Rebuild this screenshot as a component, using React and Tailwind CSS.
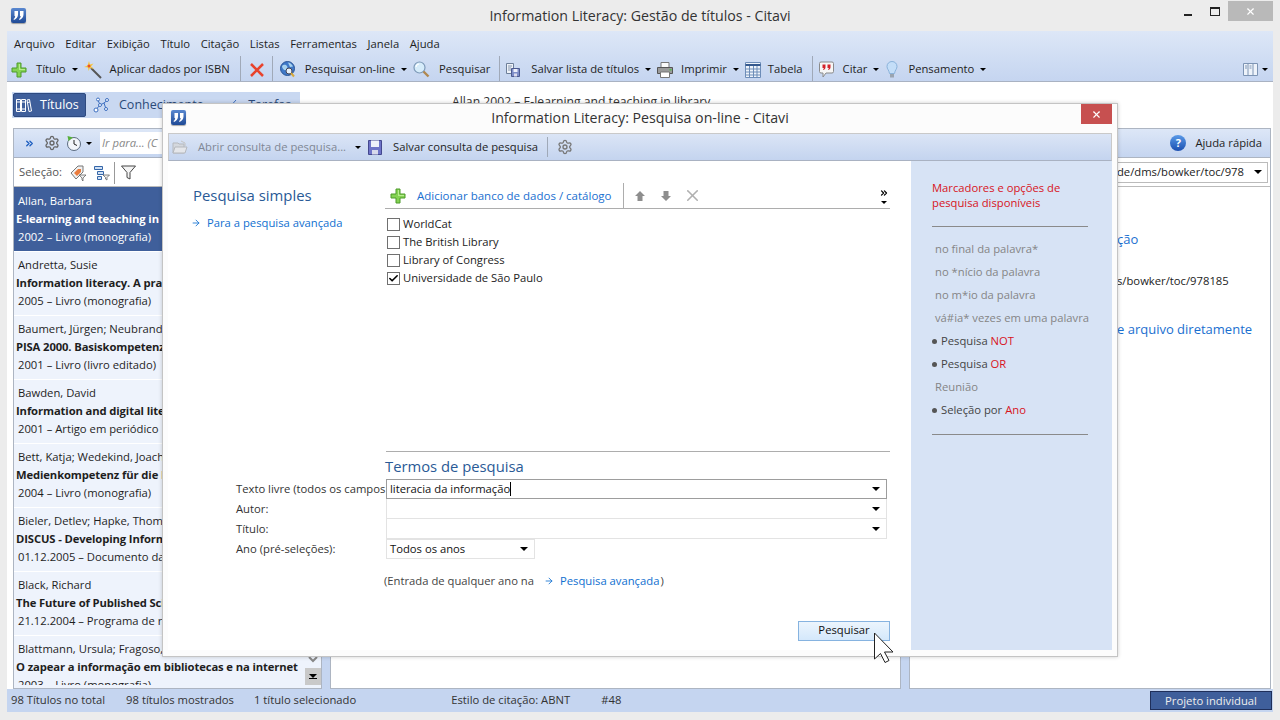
import React from 'react';
import { ChevronsRight, Settings, X, ArrowRight, Check } from 'lucide-react';

const FONT = "font-['Open_Sans','Noto_Sans',sans-serif]";

const MENU = ['Arquivo', 'Editar', 'Exibição', 'Título', 'Citação', 'Listas', 'Ferramentas', 'Janela', 'Ajuda'];

const TITLES = [
  { a: 'Allan, Barbara', t: 'E-learning and teaching in library', d: '2002 – Livro (monografia)', sel: true },
  { a: 'Andretta, Susie', t: 'Information literacy. A practitioner', d: '2005 – Livro (monografia)' },
  { a: 'Baumert, Jürgen; Neubrand', t: 'PISA 2000. Basiskompetenzen', d: '2001 – Livro (livro editado)' },
  { a: 'Bawden, David', t: 'Information and digital literacies', d: '2001 – Artigo em periódico' },
  { a: 'Bett, Katja; Wedekind, Joachim', t: 'Medienkompetenz für die Hochschule', d: '2004 – Livro (monografia)' },
  { a: 'Bieler, Detlev; Hapke, Thomas', t: 'DISCUS - Developing Information', d: '01.12.2005 – Documento da internet' },
  { a: 'Black, Richard', t: 'The Future of Published Science', d: '21.12.2004 – Programa de rádio' },
  { a: 'Blattmann, Ursula; Fragoso, Graça', t: 'O zapear a informação em bibliotecas e na internet', d: '2003 – Livro (monografia)' },
];

const DATABASES = [
  { name: 'WorldCat' },
  { name: 'The British Library' },
  { name: 'Library of Congress' },
  { name: 'Universidade de São Paulo', checked: true },
];

const HINTS = ['no final da palavra*', 'no *nício da palavra', 'no m*io da palavra', 'vá#ia* vezes em uma palavra'];

function Logo() {
  return (
    <span className="w-[15px] h-[15px] rounded-[2px] bg-gradient-to-b from-[#5a88d0] to-[#1f4a96] flex items-center justify-center shadow-[0_1px_1px_#0005]">
      <svg width="11" height="9" viewBox="0 0 11 9" fill="#fff">
        <path d="M1.500 0h3.500v3.500C5 6 3.500 8 1 9L.5 8c1-.5 1.500-1.500 1.700-3H1.500zM7 0h3.500v3.500c0 2.500-1.500 4.500-4 5.500L6 8c1-.5 1.500-1.500 1.700-3H7z" />
      </svg>
    </span>
  );
}

function Caret({ className = 'border-x-[3px] border-t-[3px]' }) {
  return <span className={`inline-block w-0 h-0 border-x-transparent border-t-black ${className}`} />;
}

function Plus2({ size = 16 }) {
  return (
    <svg width={size} height={size} viewBox="0 0 16 16">
      <path d="M6 1h4v5h5v4h-5v5H6v-5H1V6h5z" fill="#84d352" stroke="#4d9a2a" strokeWidth="1" />
      <path d="M7 2h2v5h5v1H8V2z" fill="#b8ec8f" />
    </svg>
  );
}

function Wand() {
  return (
    <svg width="18" height="18" viewBox="0 0 18 18">
      <path d="M7 7l10 10" stroke="#555" strokeWidth="2" />
      <path d="M5 0l1 3.500L9.500 2.500 7 5.500 10 8 6 7 4.500 10 4 6.500 0 6l3.500-1.500z" fill="#f6c640" />
      <circle cx="5" cy="5" r="1.500" fill="#e8502c" />
    </svg>
  );
}

function RedX() {
  return (
    <svg width="16" height="16" viewBox="0 0 16 16">
      <path d="M2 2l12 12M14 2L2 14" stroke="#e8432d" strokeWidth="2.500" />
    </svg>
  );
}

function Globe() {
  return (
    <svg width="16" height="17" viewBox="0 0 16 17">
      <circle cx="7.500" cy="7.500" r="7" fill="#3f78c8" stroke="#2a5596" />
      <path d="M2 5c2-2 4-1 5 0s0 3-1 4-4-1-4-4zM8 1.500c2 0 4 2 5 4l-3 .5z" fill="#a8d2ee" />
      <circle cx="9" cy="10" r="3" fill="#e6f0fa" stroke="#445" />
      <path d="M11 12l3 3.500" stroke="#d8a93a" strokeWidth="2" />
    </svg>
  );
}

function Magnifier() {
  return (
    <svg width="17" height="17" viewBox="0 0 17 17">
      <circle cx="6.500" cy="6.500" r="5.500" fill="#d6ecfa" stroke="#7e9ab8" strokeWidth="1.200" />
      <path d="M3 6a3.500 3.500 0 0 1 3-3" fill="none" stroke="#fff" strokeWidth="1.200" />
      <path d="M10.500 10.500l5 5" stroke="#b08850" strokeWidth="2.400" />
    </svg>
  );
}

function SaveList() {
  return (
    <svg width="16" height="16" viewBox="0 0 16 16">
      <path d="M1.500 1.500h7v10h-7z" fill="#eef2f8" stroke="#6d7f99" />
      <path d="M3 4h4M3 6h3M3 8h3" stroke="#8798b0" />
      <path d="M6.500 6.500h8v8h-8z" fill="#7f8ec8" stroke="#4c5a90" />
      <path d="M8.500 7h4v3h-4z" fill="#eef0fb" />
      <path d="M9 11.500h3v3H9z" fill="#dde" />
    </svg>
  );
}

function PrinterIcon() {
  return (
    <svg width="16" height="16" viewBox="0 0 16 16">
      <path d="M4 .500h8v5H4z" fill="#fafafa" stroke="#777" />
      <path d="M.500 5.500h15v6H.500z" fill="#9a9a9a" stroke="#555" />
      <path d="M3.500 10h9v5.500h-9z" fill="#fff" stroke="#777" />
      <path d="M12.500 7h2v1.500h-2z" fill="#4fc04a" />
    </svg>
  );
}

function Floppy() {
  return (
    <svg width="14" height="15" viewBox="0 0 14 15">
      <path d="M.5.500h13v14H.5z" fill="#6e73c8" stroke="#44488f" />
      <path d="M3 .500h8v6.500H3z" fill="#eef0fb" />
      <path d="M4 10h6v4.500H4z" fill="#d8daec" />
    </svg>
  );
}

function OpenFolder() {
  return (
    <svg width="16" height="14" viewBox="0 0 16 14">
      <path d="M1 3h5l1 1h5v9H1z" fill="#d4d8de" stroke="#b5b8bd" />
      <path d="M9 1l4 2v3" fill="none" stroke="#c4c4c4" />
      <path d="M1 13l2-6h12l-2 6z" fill="#e4e6ea" stroke="#b5b8bd" />
    </svg>
  );
}

function TableIcon() {
  return (
    <svg width="16" height="16" viewBox="0 0 16 16" fill="none" stroke="#6d8db8">
      <path d="M.5.500h15v15H.5z" fill="#eef3fa" />
      <path d="M.5 3h15" stroke="#35598e" strokeWidth="2" />
      <path d="M.5 7h15M.5 10h15M.5 13h15M4.500 4v12M8.500 4v12M12 4v12" />
    </svg>
  );
}

function QuoteBubble() {
  return (
    <svg width="15" height="17" viewBox="0 0 15 17">
      <path d="M2 1h11q1.500 0 1.500 1.500v8q0 1.500-1.500 1.500H7l-3 4v-4H2Q.500 12 .500 10.500v-8Q.500 1 2 1z" fill="#f6f6f6" stroke="#8a8a8a" />
      <path d="M3.500 3.500h3v3q0 1.500-2 2.500l-.5-.8q1-.6 1-1.200H3.500zM8.500 3.500h3v3q0 1.500-2 2.500l-.5-.8q1-.6 1-1.200H8.500z" fill="#d3222a" />
    </svg>
  );
}

function Bulb() {
  return (
    <svg width="12" height="18" viewBox="0 0 12 18">
      <path d="M6 .500C3 .500 1 2.800 1 5.500c0 2.500 2 3.500 2.500 7h5C9 9 11 8 11 5.500 11 2.800 9 .500 6 .500z" fill="#c4def8" stroke="#8ab2da" />
      <path d="M4 13h4v3.500H4z" fill="#9aa4b0" />
    </svg>
  );
}

function Help() {
  return (
    <span className="w-[16px] h-[16px] rounded-full bg-gradient-to-b from-[#5a9ae8] to-[#1c4fb0] text-white text-[11px] font-bold flex items-center justify-center">?</span>
  );
}

function TitlesIcon() {
  return (
    <svg width="16" height="15" viewBox="0 0 16 15" fill="none" stroke="#fff" strokeWidth="1">
      <path d="M.5 1.500h4v12h-4zM5.500 1.500h4v12h-4zM11 2l2.500-.5 2 11.500-2.500.5z" />
      <path d="M1 4h3M1 11h3M6 4h3M6 11h3M11.500 4.500l2.500-.5" />
    </svg>
  );
}

function KnowledgeIcon() {
  return (
    <svg width="17" height="17" viewBox="0 0 17 17" fill="#fff" stroke="#3d6fc0">
      <path d="M3.500 12L7 8l4-2 3-2.500M7 8L5 3M11 6l2 6" fill="none" />
      <circle cx="3" cy="13" r="2" />
      <circle cx="7" cy="8" r="1.500" />
      <circle cx="5" cy="2.500" r="1.500" />
      <circle cx="14" cy="3" r="1.500" />
      <circle cx="13" cy="12" r="1.500" />
    </svg>
  );
}

function TasksIcon() {
  return (
    <svg width="15" height="12" viewBox="0 0 15 12" fill="none" stroke="#3d6fc0">
      <path d="M1 7l3 3 8-9" />
      <path d="M8 8h6M10 11h4" />
    </svg>
  );
}

function ClockIcon() {
  return (
    <svg width="16" height="16" viewBox="0 0 16 16">
      <circle cx="8" cy="9" r="6.500" fill="#f2f5fa" stroke="#5b6b80" />
      <path d="M8 5v4l3 1.500" fill="none" stroke="#222" />
      <path d="M1.500 1l5.500 1.500-4.500 3.500z" fill="#57b03a" />
    </svg>
  );
}

function TagIcon() {
  return (
    <svg width="17" height="16" viewBox="0 0 17 16">
      <path d="M1 8l7-7h5v6l-7 7z" fill="#f0f0f0" stroke="#777" />
      <path d="M4 8l4-4h3v3l-4 4z" fill="#ea7b3c" />
      <path d="M9 10h7l-3 3v3l-1-1v-2z" fill="#eee" stroke="#555" strokeWidth=".7" />
    </svg>
  );
}

function TreeIcon() {
  return (
    <svg width="17" height="16" viewBox="0 0 17 16" fill="#cfe0f5" stroke="#3566a8">
      <path d="M1.500 1.500h8v3h-8zM4.500 6.500h6v3h-6zM4.500 11.500h4v3h-4z" />
      <path d="M10 10h6.500l-2.500 2.500V15l-1.500-1v-1.500z" fill="#eee" stroke="#555" strokeWidth=".7" />
    </svg>
  );
}

function FilterIcon() {
  return (
    <svg width="15" height="15" viewBox="0 0 15 15">
      <path d="M.5 1h14L9 7.500V14l-3-1.500v-5z" fill="#f4f4f4" stroke="#444" />
    </svg>
  );
}

function ColumnsIcon() {
  return (
    <svg width="15" height="13" viewBox="0 0 15 13" fill="none" stroke="#7d94b4">
      <path d="M.5.500h14v12H.5z" fill="#eef3fa" />
      <path d="M5 .500v12M10 .500v12M2 3h2M2 5h2M6.500 3h2M6.500 5h2" />
    </svg>
  );
}

function Cursor() {
  return (
    <svg width="21" height="31" viewBox="0 0 21 31">
      <path d="M1.500 1v26l6-5.500 4.500 9 4-2-4.500-8.500H20z" fill="#fff" stroke="#222" strokeWidth="1" />
    </svg>
  );
}

function ToolItem({ icon, label, caret, className = '' }) {
  return (
    <div className={`flex items-center h-[22px] whitespace-nowrap ${className}`}>
      {icon}
      <span className="text-[11.25px] text-[#1e1e1e]">{label}</span>
      {caret && <span className="ml-[6px] flex"><Caret /></span>}
    </div>
  );
}

function TitleRow({ a, t, d, sel }) {
  return (
    <div className={`h-[64px] shrink-0 text-[11.25px] leading-[18px] whitespace-nowrap overflow-hidden ${sel ? 'pt-[5px] bg-[#3f5f9b] text-white' : 'pt-[4px] border-t border-white text-[#1e1e1e]'}`}>
      <div className="pl-[4px]">{a}</div>
      <div className="pl-[2px] font-bold tracking-[-0.12px]">{t}</div>
      <div className="pl-[4px]">{d}</div>
    </div>
  );
}

function SearchField({ label, value, active, half }) {
  return (
    <div className="flex items-center h-[20px]">
      <span className="w-[150px] shrink-0 text-[11.25px] text-[#333] whitespace-nowrap">{label}</span>
      <div className={`h-[20px] flex items-center justify-between pl-[3px] pr-[6px] text-[11.25px] text-[#111] ${half ? 'w-[149px] border border-[#e3e3e3]' : 'w-[501px]'} ${active ? 'border border-[#9d9d9d]' : half ? '' : 'border-b border-x border-[#e3e3e3]'}`}>
        <span className="flex items-center">
          {value}
          {active && <span className="w-px h-[14px] bg-black" />}
        </span>
        <Caret className="border-x-[4px] border-t-[4px]" />
      </div>
    </div>
  );
}

function SearchDialog() {
  return (
    <div className="absolute left-[162px] top-[103px] w-[956px] h-[554px] bg-[#fcfcfc] border border-[#c4c4c4] shadow-[0_0_4px_#0003] flex flex-col px-[5px] pb-[6px]">
      <div className="h-[29px] pb-[2px] shrink-0 flex items-center relative">
        <span className="ml-[3px]"><Logo /></span>
        <span className="absolute left-0 right-0 text-center text-[14.2px] text-[#333]">Information Literacy: Pesquisa on-line - Citavi</span>
        <div className="ml-auto w-[31px] h-[20px] -mt-[7px] bg-[#c75050] flex items-center justify-center relative">
          <X size={11} strokeWidth={2.500} className="text-white" />
        </div>
      </div>
      <div className="h-[28px] shrink-0 flex items-center bg-gradient-to-b from-[#dbe5f6] to-[#c4d4ef] border border-[#c9c9c9] border-b-[#a9b2c2] pl-[3px]">
        <OpenFolder />
        <span className="ml-[10px] text-[11.25px] text-[#7f8794] whitespace-nowrap">Abrir consulta de pesquisa...</span>
        <span className="ml-[9px] flex"><Caret /></span>
        <span className="ml-[7px] flex"><Floppy /></span>
        <span className="ml-[11px] text-[11.25px] text-[#1e1e1e] whitespace-nowrap">Salvar consulta de pesquisa</span>
        <span className="ml-[9px] w-px h-[20px] bg-[#9fa9b8]" />
        <Settings size={16} className="ml-[9px] text-[#777]" />
      </div>
      <div className="flex-1 flex min-h-0">
        <div className="flex-1 min-w-0 bg-white flex flex-col pl-[25px] pr-[21px]">
          <div className="flex h-[291px] shrink-0">
            <div className="w-[192px] shrink-0 pt-[24px]">
              <div className="text-[14.9px] leading-[20px] text-[#2a5a96]">Pesquisa simples</div>
              <div className="mt-[10px] -ml-[2px] flex items-center text-[11.25px] text-[#0f6fd0] whitespace-nowrap">
                <ArrowRight size={10} className="mr-[6px]" />
                Para a pesquisa avançada
              </div>
            </div>
            <div className="flex-1 min-w-0">
              <div className="mt-[21px] pt-px h-[27px] flex items-center border-b border-[#adadad]">
                <span className="ml-[5px] flex"><Plus2 /></span>
                <span className="ml-[11px] text-[11.5px] text-[#1a6fd0] whitespace-nowrap">Adicionar banco de dados / catálogo</span>
                <span className="ml-[12px] w-px h-[26px] bg-[#adadad]" />
                <svg className="ml-[11px]" width="10" height="10" viewBox="0 0 10 10"><path d="M5 0l5 5H7.500v5h-5V5H0z" fill="#8e8e8e" /></svg>
                <svg className="ml-[16px]" width="10" height="10" viewBox="0 0 10 10"><path d="M5 10l5-5H7.500V0h-5v5H0z" fill="#8e8e8e" /></svg>
                <X size={19} className="ml-[12px] text-[#b0b0b0]" />
                <div className="ml-auto mr-[1px] flex flex-col items-center">
                  <ChevronsRight size={10} strokeWidth={3} className="text-black" />
                  <span className="mt-[3px] flex"><Caret /></span>
                </div>
              </div>
              <div className="mt-[6px] flex flex-col pl-[2px]">
                {DATABASES.map((db) => (
                  <label key={db.name} className="h-[18px] flex items-center text-[11.25px] text-[#222] whitespace-nowrap">
                    <span className="w-[13px] h-[13px] mr-[3px] border border-[#707070] bg-white flex items-center justify-center">
                      {db.checked && <Check size={11} strokeWidth={3.500} className="text-black" />}
                    </span>
                    {db.name}
                  </label>
                ))}
              </div>
            </div>
          </div>
          <div className="ml-[193px] -mt-px border-t border-[#adadad] pt-[4px] -indent-px text-[14.8px] leading-[21px] text-[#2a5a96]">Termos de pesquisa</div>
          <div className="ml-[43px] mt-[2px]">
            <SearchField label="Texto livre (todos os campos" value="literacia da informação" active />
            <SearchField label="Autor:" />
            <SearchField label="Título:" />
            <SearchField label="Ano (pré-seleções):" value="Todos os anos" half />
          </div>
          <div className="ml-[191px] mt-[14px] flex items-center text-[11.25px] text-[#444] whitespace-nowrap">
            (Entrada de qualquer ano na
            <ArrowRight size={10} className="ml-[10px] mr-[6px] text-[#0f6fd0]" />
            <span className="text-[#0f6fd0]">Pesquisa avançada</span>
            <span className="ml-[1px]">)</span>
          </div>
          <button className="self-end mt-[31px] w-[92px] h-[20px] shrink-0 border border-[#86b3e0] bg-gradient-to-b from-[#ecf5fd] to-[#d4e8fb] text-[11.25px] text-[#111]">Pesquisar</button>
        </div>
        <div className="w-[201px] shrink-0 bg-[#d7e3f5] pl-[21px] pr-[24px] pt-[19px] text-[11.25px]">
          <div className="leading-[15px] text-[#d8141c]">Marcadores e opções de pesquisa disponíveis</div>
          <div className="mt-[16px] mb-[11px] border-t border-[#8a8a8a]" />
          {HINTS.map((h) => (
            <div key={h} className="h-[23px] pl-[3px] flex items-center text-[#858585] whitespace-nowrap">{h}</div>
          ))}
          <div className="h-[23px] flex items-center text-[#444] whitespace-nowrap"><span className="mr-[4px] w-[5px] h-[5px] rounded-full bg-[#555]" />Pesquisa&nbsp;<span className="text-[#d8141c]">NOT</span></div>
          <div className="h-[23px] flex items-center text-[#444] whitespace-nowrap"><span className="mr-[4px] w-[5px] h-[5px] rounded-full bg-[#555]" />Pesquisa&nbsp;<span className="text-[#d8141c]">OR</span></div>
          <div className="h-[23px] pl-[3px] flex items-center text-[#858585]">Reunião</div>
          <div className="h-[23px] flex items-center text-[#444] whitespace-nowrap"><span className="mr-[4px] w-[5px] h-[5px] rounded-full bg-[#555]" />Seleção por&nbsp;<span className="text-[#d8141c]">Ano</span></div>
          <div className="mt-[12px] border-t border-[#8a8a8a]" />
        </div>
      </div>
    </div>
  );
}

export default function App() {
  return (
    <div className={`relative w-[1280px] h-[720px] overflow-hidden bg-[#ececec] ${FONT} flex flex-col`}>
      {/* title bar */}
      <div className="h-[31px] shrink-0 flex items-center relative pl-[11px]">
        <Logo />
        <span className="absolute left-0 right-0 text-center text-[14.2px] text-[#333]">Information Literacy: Gestão de títulos - Citavi</span>
        <div className="ml-auto flex items-start self-start pt-px pr-[7px]">
          <span className="w-[28px] h-[20px] flex items-center justify-center"><span className="w-[8px] h-[2px] mt-[8px] bg-[#222]" /></span>
          <span className="w-[26px] h-[20px] flex items-center justify-center"><span className="w-[10px] h-[9px] border border-[#222] border-t-2" /></span>
          <span className="w-[45px] h-[20px] bg-[#b9b9b9] flex items-center justify-center"><X size={11} strokeWidth={2.500} className="text-white" /></span>
        </div>
      </div>

      <div className="flex-1 mx-[7px] mb-[8px] flex flex-col min-h-0 bg-white">
        {/* menu and toolbar */}
        <div className="h-[51px] shrink-0 bg-gradient-to-b from-[#dde7f7] to-[#c5d5f0] border-b border-[#a9b2c2]">
          <div className="h-[24px] flex items-end pb-[2px] pl-[7px] gap-[10.6px] text-[11.25px] text-[#1e1e1e]">
            {MENU.map((m) => <span key={m}>{m}</span>)}
          </div>
          <div className="h-[26px] pt-[3px] flex items-center pl-[4px]">
            <ToolItem icon={<span className="mr-[9px] flex"><Plus2 /></span>} label="Título" caret />
            <ToolItem icon={<span className="ml-[6px] mr-[8px] flex"><Wand /></span>} label="Aplicar dados por ISBN" />
            <span className="ml-[10px] w-px h-[25px] -mt-[3px] bg-[#a0a9b8]" />
            <span className="ml-[8px] flex"><RedX /></span>
            <span className="ml-[7px] w-px h-[25px] -mt-[3px] bg-[#a0a9b8]" />
            <ToolItem icon={<span className="ml-[7px] mr-[9px] flex"><Globe /></span>} label="Pesquisar on-line" caret />
            <ToolItem icon={<span className="ml-[6px] mr-[9px] flex"><Magnifier /></span>} label="Pesquisar" />
            <span className="ml-[9px] w-px h-[25px] -mt-[3px] bg-[#a0a9b8]" />
            <ToolItem icon={<span className="ml-[5px] mr-[10px] flex"><SaveList /></span>} label="Salvar lista de títulos" caret />
            <ToolItem icon={<span className="ml-[6px] mr-[8px] flex"><PrinterIcon /></span>} label="Imprimir" caret />
            <ToolItem icon={<span className="ml-[6px] mr-[7px] flex"><TableIcon /></span>} label="Tabela" />
            <span className="ml-[9px] w-px h-[25px] -mt-[3px] bg-[#a0a9b8]" />
            <ToolItem icon={<span className="ml-[6px] mr-[9px] flex"><QuoteBubble /></span>} label="Citar" caret />
            <ToolItem icon={<span className="ml-[7px] mr-[10px] flex"><Bulb /></span>} label="Pensamento" caret />
            <div className="ml-auto mr-[5px] flex items-center gap-[4px]"><ColumnsIcon /><Caret /></div>
          </div>
        </div>

        {/* body */}
        <div className="flex-1 flex min-h-0">
          <div className="w-[315px] shrink-0 flex flex-col pl-[5px]">
            <div className="mt-[10px] h-[26px] w-[288px] bg-[#c9d8f1] flex items-center text-[12.5px] whitespace-nowrap overflow-hidden">
              <div className="ml-px h-[24px] w-[73px] shrink-0 bg-[#3f5f9b] border border-[#2e4a80] rounded-[2px] flex items-center pl-[2px] text-white">
                <TitlesIcon /><span className="ml-[8px]">Títulos</span>
              </div>
              <span className="ml-[7px] flex"><KnowledgeIcon /></span>
              <span className="ml-[9px] text-[#2b4a78]">Conhecimento</span>
              <span className="ml-[20px] flex"><TasksIcon /></span>
              <span className="ml-[9px] text-[#2b4a78]">Tarefas</span>
            </div>
            <div className="mt-[10px] flex-1 min-h-0 ml-px border border-[#adb5c2] flex flex-col bg-[#eef3fc]">
              <div className="h-[29px] shrink-0 bg-gradient-to-b from-[#dde7f7] to-[#c5d5f0] border-b border-[#a9b2c2] flex items-center pl-[10px]">
                <ChevronsRight size={11} strokeWidth={3} className="text-[#1e5fc0]" />
                <Settings size={16} className="ml-[9px] text-[#666]" />
                <span className="ml-[6px] flex"><ClockIcon /></span>
                <span className="ml-[4px] flex"><Caret /></span>
                <span className="ml-[8px] w-[80px] h-[22px] bg-white pl-[2px] text-[11.25px] italic leading-[22px] text-[#888] whitespace-nowrap">Ir para... (C</span>
              </div>
              <div className="h-[29px] pt-px shrink-0 bg-white border-b border-[#bbb] flex items-center pl-[5px] text-[11.25px] text-[#555]">
                Seleção:
                <span className="ml-[8px] flex"><TagIcon /></span>
                <span className="ml-[6px] flex"><TreeIcon /></span>
                <span className="ml-[4px] w-px h-[22px] bg-[#999]" />
                <span className="ml-[6px] flex"><FilterIcon /></span>
              </div>
              <div className="h-[498px] flex min-w-0 overflow-hidden">
                <div className="flex-1 min-w-0 flex flex-col">
                  {TITLES.map((t) => <TitleRow key={t.a} {...t} />)}
                </div>
                <div className="w-[16px] shrink-0 flex flex-col items-center justify-end">
                  <svg className="mb-[5px]" width="10" height="7" viewBox="0 0 10 7"><path d="M1 1l4 4 4-4" fill="none" stroke="#888" strokeWidth="2" /></svg>
                  <div className="w-[16px] h-[17px] bg-[#c9c9c9] flex flex-col items-center justify-center">
                    <Caret className="border-x-[4px] border-t-[4px]" />
                    <span className="w-[8px] h-px bg-black" />
                  </div>
                </div>
              </div>
            </div>
          </div>
          <div className="w-[8px] shrink-0 self-end h-[41px] bg-[#c5d5f0]" />
          <div className="w-[571px] shrink-0 flex flex-col">
            <div className="h-[46px] shrink-0 pl-[122px] pt-[11px] text-[12.2px] text-[#333] whitespace-nowrap overflow-hidden">Allan 2002 – E-learning and teaching in library</div>
            <div className="flex-1 border border-[#adb5c2] bg-white" />
          </div>
          <div className="w-[8px] shrink-0 self-end h-[41px] bg-[#c5d5f0]" />
          <div className="flex-1 min-w-0 flex flex-col pr-[2px] pt-[46px]">
            <div className="h-[30px] shrink-0 bg-gradient-to-b from-[#dde7f7] to-[#c5d5f0] border border-[#adb5c2] flex items-center justify-end pr-[8px] text-[11.25px] text-[#1e1e1e]">
              <Help /><span className="ml-[9px]">Ajuda rápida</span>
            </div>
            <div className="flex-1 border-x border-b border-[#adb5c2] bg-white flex flex-col">
              <div className="h-[29px] flex items-center border-b border-[#bbb] justify-end pr-[2px]">
                <div className="h-[21px] w-[156px] border border-[#bbb] flex items-center justify-end pr-[5px] text-[11.25px] text-[#222] whitespace-nowrap">
                  <span>de/dms/bowker/toc/978</span>
                  <Caret className="ml-[10px] border-x-[4px] border-t-[4px]" />
                </div>
              </div>
              <div className="pl-[207px] mt-[42px] text-[13px] text-[#1a6fd0] leading-[20px]">ção</div>
              <div className="pl-[207px] mt-[24px] text-[11.25px] text-[#222] whitespace-nowrap">s/bowker/toc/978185</div>
              <div className="pl-[207px] mt-[30px] text-[13px] text-[#1a6fd0] whitespace-nowrap">e arquivo diretamente</div>
            </div>
          </div>
        </div>

        {/* status bar */}
        <div className="h-[23px] shrink-0 bg-[#c5d5f0] flex items-center text-[11.25px] text-[#333] whitespace-nowrap pl-[4px]">
          <span>98 Títulos no total</span>
          <span className="ml-[21px]">98 títulos mostrados</span>
          <span className="ml-[20px]">1 título selecionado</span>
          <span className="ml-[95px]">Estilo de citação: ABNT</span>
          <span className="ml-[31px]">#48</span>
          <span className="ml-auto mr-px w-[122px] h-[19px] bg-[#3f5f9b] border border-[#1f2f5a] text-[#eee] text-center leading-[17px]">Projeto individual</span>
        </div>
      </div>

      <SearchDialog />
      <div className="absolute left-[873px] top-[632px]"><Cursor /></div>
    </div>
  );
}
